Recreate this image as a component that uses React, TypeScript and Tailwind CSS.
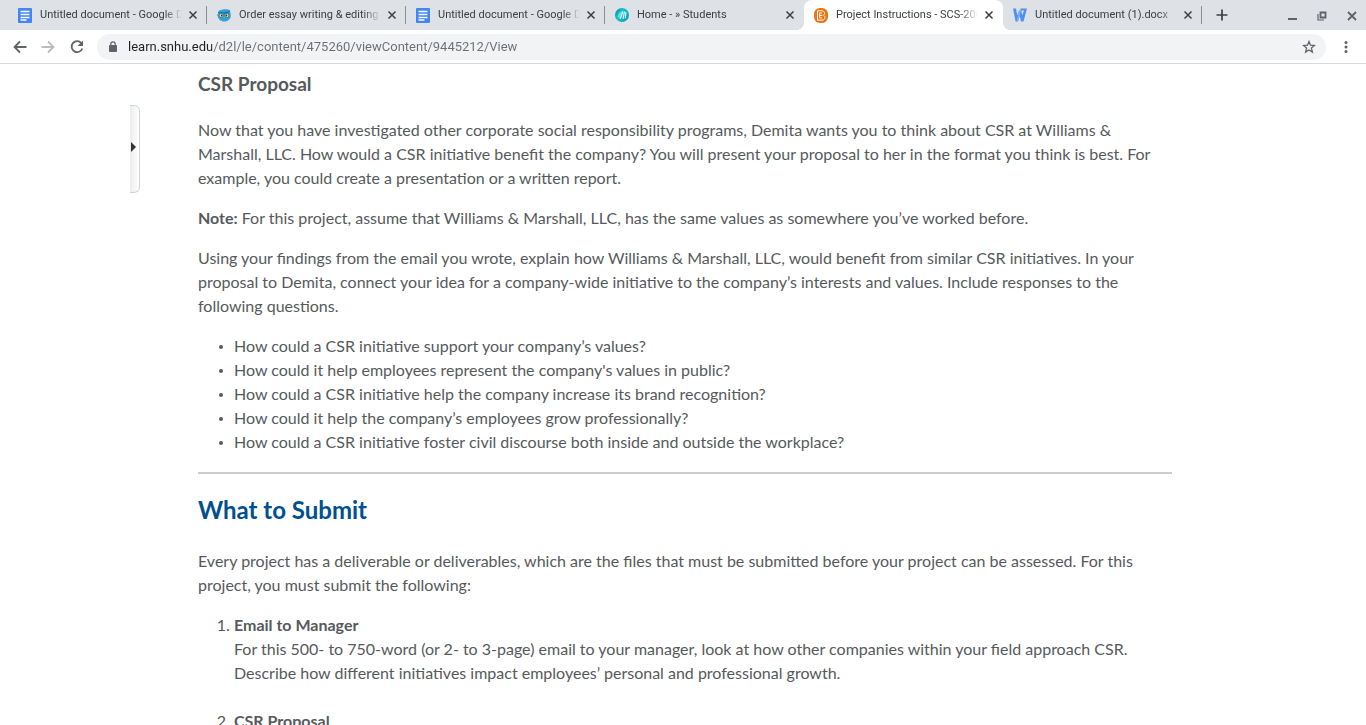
import type { ReactNode } from "react";

function DocsIcon() {
  return (
    <svg viewBox="0 0 14 15" className="h-[15px] w-3.5">
      <rect width="14" height="15" rx="1" fill="#4285f4" />
      <path d="M2.500 3.500h9M2.500 6.500h9M2.500 9.500h9M2.500 12h6" stroke="#fff" strokeWidth="1.300" />
    </svg>
  );
}

function OwlIcon() {
  return (
    <svg viewBox="0 0 14 14" className="size-3.5">
      <path d="M2 2.500C3.500 2.500 4.500 1.200 7.500 1.200S11 1.800 13 2c-.2 1.500.8 3 .8 5.500 0 3.500-3 6-6.300 6S1.500 11.500 1 9L0 6.500l1.200-.8z" fill="#2aa3e0" />
      <path d="M1 4.200C3.500 5 5.500 4.500 7 5.200c1.500-.7 3.500-.5 5.500-1.700" stroke="#1b6f9e" strokeWidth="1.100" fill="none" />
      <circle cx="4.300" cy="7.500" r="2.100" fill="#e6e8bd" stroke="#4a6b62" strokeWidth=".8" />
      <circle cx="9.800" cy="7.500" r="2.100" fill="#e6e8bd" stroke="#4a6b62" strokeWidth=".8" />
      <circle cx="4.700" cy="7.500" r=".9" fill="#20323b" />
      <circle cx="9.400" cy="7.500" r=".9" fill="#20323b" />
      <path d="M6.300 8.800h1.600l-.8 1.700z" fill="#e7a63a" />
    </svg>
  );
}

function StudentsIcon() {
  return (
    <svg viewBox="0 0 14 14" className="size-3.5">
      <defs>
        <linearGradient id="students-fill" x1="0" y1="0" x2="1" y2="0.6">
          <stop offset="0" stopColor="#067f92" />
          <stop offset="0.45" stopColor="#17c3cf" />
          <stop offset="1" stopColor="#0aa5b8" />
        </linearGradient>
      </defs>
      <circle cx="7" cy="7" r="7" fill="url(#students-fill)" />
      <path d="M2.500 8.500C3.500 5 6 3 8.500 2.800L5 11z" fill="#5fe0e2" />
      <path d="M5.200 11 8 3.500M8 10.800 9.500 3.500M10.300 10.200 10.900 4" stroke="#d8fafa" strokeWidth="1.200" fill="none" />
    </svg>
  );
}

function BrightspaceIcon() {
  return (
    <svg viewBox="0 0 14 15" className="h-[15px] w-3.5">
      <rect width="14" height="15" rx="6" fill="#e87511" />
      <path
        d="M3.500 2.800h4.300c3 0 3.400 3.200 1.700 4.400 2.300 1.200 1.800 5-1.500 5H3.500z"
        fill="none"
        stroke="#fff"
        strokeWidth="1"
      />
      <path d="M5.700 4.800V10.200M5.700 5h2.200M5.700 7.400h2.600M5.700 10h2.400" fill="none" stroke="#fff" strokeWidth=".9" />
    </svg>
  );
}

function WpsIcon() {
  return (
    <svg viewBox="0 0 14 14" className="size-3.5">
      <path d="M0 .5h3l1.300 7L6.200 2h2l1 5.500L11 2.500H7.500V.5H14L10.500 13.500H8L6.800 8 5 13.500H2.600z" fill="#4f8ff0" />
      <path d="M6.200 2h2L5 13.500H3.500z" fill="#80b0fa" />
    </svg>
  );
}

function CloseIcon() {
  return (
    <svg viewBox="0 0 10 10" className="size-2.5">
      <path d="M1.500 1.500l7 7M8.500 1.500l-7 7" stroke="#3c4043" strokeWidth="1.500" />
    </svg>
  );
}

interface Tab {
  title: string;
  icon: ReactNode;
  active?: boolean;
  divider?: boolean;
}

const tabs: Tab[] = [
  { title: "Untitled document - Google Docs", icon: <DocsIcon />, divider: true },
  { title: "Order essay writing & editing service", icon: <OwlIcon />, divider: true },
  { title: "Untitled document - Google Docs", icon: <DocsIcon />, divider: true },
  { title: "Home - » Students", icon: <StudentsIcon /> },
  { title: "Project Instructions - SCS-200", icon: <BrightspaceIcon />, active: true },
  { title: "Untitled document (1).docx", icon: <WpsIcon />, divider: true },
];

function TabStrip() {
  return (
    <header className="flex h-[30px] shrink-0 items-stretch bg-[#dee1e6] pl-2">
      <nav aria-label="Tabs" className="flex min-w-0">
        {tabs.map((tab, i) => (
          <div
            key={i}
            className={
              tab.active
                ? "relative flex w-[199px] min-w-0 items-center rounded-t-lg bg-white pl-2.5 pr-[9px]"
                : "relative flex w-[199px] min-w-0 items-center pl-2.5 pr-[9px]"
            }
          >
            {tab.active && (
              <>
                <span className="absolute bottom-0 right-full size-2 bg-[radial-gradient(circle_at_0_0,transparent_8px,white_8px)]" />
                <span className="absolute bottom-0 left-full size-2 bg-[radial-gradient(circle_at_100%_0,transparent_8px,white_8px)]" />
              </>
            )}
            <a href="#tab" className="flex min-w-0 flex-1 items-center gap-2">
              <span className="w-3.5 shrink-0">{tab.icon}</span>
              <span className="min-w-0 flex-1 overflow-hidden whitespace-nowrap text-[11px] leading-4 text-[#3c4043] [mask-image:linear-gradient(to_right,black_calc(100%-18px),transparent)]">
                {tab.title}
              </span>
            </a>
            <button aria-label="Close tab" className="ml-1.5 shrink-0">
              <CloseIcon />
            </button>
            {tab.divider && <span className="absolute right-0 top-1.5 h-[18px] w-px bg-[#8a8d91]" />}
          </div>
        ))}
      </nav>
      <button aria-label="New tab" className="ml-3.5 shrink-0">
        <svg viewBox="0 0 12 12" className="size-3">
          <path d="M6 .5v11M.5 6h11" stroke="#3c4043" strokeWidth="1.700" />
        </svg>
      </button>
      <div className="ml-auto flex items-center gap-5 pr-[9px] pt-0.5">
        <button aria-label="Minimize">
          <svg viewBox="0 0 9 10" className="h-2.5 w-[9px]">
            <path d="M0 8h9" stroke="#5f6368" strokeWidth="2" />
          </svg>
        </button>
        <button aria-label="Restore">
          <svg viewBox="0 0 10 10" className="size-2.5">
            <path d="M3.500 1.500h5v5h-5z" fill="none" stroke="#5f6368" strokeWidth="1.800" />
            <path d="M1 3v6h6" fill="none" stroke="#5f6368" strokeWidth="1.200" />
          </svg>
        </button>
        <button aria-label="Close window">
          <svg viewBox="0 0 10 10" className="size-2.5">
            <path d="M1 1l8 8M9 1L1 9" stroke="#5f6368" strokeWidth="1.800" />
          </svg>
        </button>
      </div>
    </header>
  );
}

function Toolbar() {
  return (
    <div className="flex h-[34px] shrink-0 items-center border-b border-[#d9dbde] bg-white pl-3 pr-3">
      <div className="flex items-center gap-3">
        <button aria-label="Back">
          <svg viewBox="0 0 16 16" className="size-4">
            <path d="M14.500 8H2.500M8 2.500 2.500 8 8 13.500" fill="none" stroke="#5f6368" strokeWidth="1.800" />
          </svg>
        </button>
        <button aria-label="Forward">
          <svg viewBox="0 0 16 16" className="size-4">
            <path d="M1.500 8h12M8 2.500 13.500 8 8 13.500" fill="none" stroke="#babcbe" strokeWidth="1.800" />
          </svg>
        </button>
        <button aria-label="Reload" className="ml-px">
          <svg viewBox="0 0 16 16" className="size-4">
            <path d="M12.300 4A5.500 5.500 0 1 0 13.300 9.500" fill="none" stroke="#5f6368" strokeWidth="1.800" />
            <path d="M14 1.500V7H8.500z" fill="#5f6368" />
          </svg>
        </button>
      </div>
      <div className="ml-3 flex h-[26px] min-w-0 flex-1 items-center rounded-full bg-[#f1f3f4] pl-3 pr-2.5">
        <svg viewBox="0 0 8 11" className="h-[11px] w-2 shrink-0">
          <rect y="4" width="8" height="7" rx="1" fill="#5f6368" />
          <path d="M1.800 4.500V3a2.200 2.200 0 0 1 4.400 0v1.500" fill="none" stroke="#5f6368" strokeWidth="1.200" />
        </svg>
        <input
          aria-label="Address"
          defaultValue="learn.snhu.edu/d2l/le/content/475260/viewContent/9445212/View"
          className="ml-[11px] min-w-0 flex-1 bg-[linear-gradient(to_right,#202124_84px,#6b6f73_84px)] bg-clip-text text-[13px] text-transparent caret-[#202124] outline-none"
        />
        <button aria-label="Bookmark this page">
          <svg viewBox="0 0 14 14" className="size-3.5">
            <path d="M7 1.500 8.500 5.200l4 .3-3.100 2.600 1 3.900L7 9.900 3.600 12l1-3.900L1.500 5.500l4-.3z" fill="none" stroke="#5f6368" strokeWidth="1.300" />
          </svg>
        </button>
      </div>
      <button aria-label="Menu" className="ml-3">
        <svg viewBox="0 0 16 16" className="size-4">
          <circle cx="8" cy="3.500" r="1.500" fill="#5f6368" />
          <circle cx="8" cy="8" r="1.500" fill="#5f6368" />
          <circle cx="8" cy="12.500" r="1.500" fill="#5f6368" />
        </svg>
      </button>
    </div>
  );
}

const questions = [
  "How could a CSR initiative support your company’s values?",
  "How could it help employees represent the company's values in public?",
  "How could a CSR initiative help the company increase its brand recognition?",
  "How could it help the company’s employees grow professionally?",
  "How could a CSR initiative foster civil discourse both inside and outside the workplace?",
];

export default function App() {
  return (
    <div className="flex h-screen flex-col bg-white font-[Roboto,sans-serif]">
      <TabStrip />
      <Toolbar />
      <main className="flex min-h-0 flex-1 items-start overflow-y-auto pl-[130px] pr-[194px] font-[Lato,sans-serif] text-base leading-6 text-[#565a5c] [scrollbar-width:none]">
        <button
          aria-label="Open side panel"
          className="mt-[41px] flex h-[88px] w-2.5 shrink-0 items-center rounded-r-md border border-l-0 border-[#cdd5dc] bg-linear-to-r from-[#ececec] to-white pb-1 pl-px"
        >
          <svg viewBox="0 0 5 10" className="h-2.5 w-[5px]">
            <path d="M0 0l5 5-5 5z" fill="#333" />
          </svg>
        </button>
        <article className="ml-[58px] min-w-0 flex-1 pb-10">
          <h3 className="mt-2 text-[19px] font-bold">CSR Proposal</h3>
          <p className="mt-[22px]">
            Now that you have investigated other corporate social responsibility programs, Demita wants you to think
            about CSR at Williams &amp; Marshall, LLC. How would a CSR initiative benefit the company? You will present
            your proposal to her in the format you think is best. For example, you could create a presentation or a
            written report.
          </p>
          <p className="mt-4">
            <strong>Note:</strong> For this project, assume that Williams &amp; Marshall, LLC, has the same values as
            somewhere you’ve worked before.
          </p>
          <p className="mt-4">
            Using your findings from the email you wrote, explain how Williams &amp; Marshall, LLC, would benefit from
            similar CSR initiatives. In your proposal to Demita, connect your idea for a company-wide initiative to the
            company’s interests and values. Include responses to the following questions.
          </p>
          <ul className="mt-4 pl-[21px]">
            {questions.map((q) => (
              <li
                key={q}
                className="flex gap-[11px] before:mt-[11px] before:size-1 before:shrink-0 before:rounded-full before:bg-[#565a5c]"
              >
                {q}
              </li>
            ))}
          </ul>
          <hr className="mt-[18px] border-t-2 border-[#cccccc]" />
          <h2 className="mt-[18px] text-2xl leading-9 font-bold text-[#00508f]">What to Submit</h2>
          <p className="mt-[21px]">
            Every project has a deliverable or deliverables, which are the files that must be submitted before your
            project can be assessed. For this project, you must submit the following:
          </p>
          <ol className="mt-4 flex list-decimal flex-col gap-6 pl-9">
            <li>
              <strong>Email to Manager</strong>
              <br />
              For this 500- to 750-word (or 2- to 3-page) email to your manager, look at how other companies within your
              field approach CSR. Describe how different initiatives impact employees’ personal and professional growth.
            </li>
            <li>
              <strong>CSR Proposal</strong>
            </li>
          </ol>
        </article>
      </main>
    </div>
  );
}
